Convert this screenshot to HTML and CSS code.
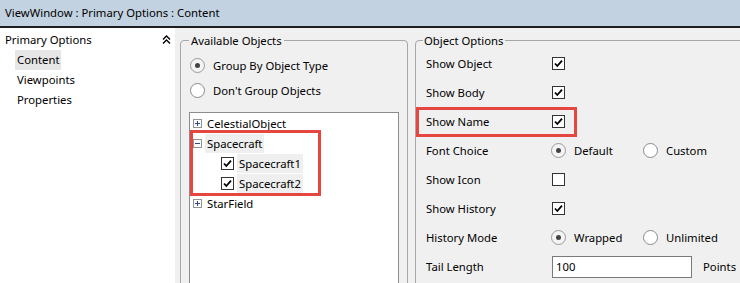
FILE: index.html
```html
<!DOCTYPE html>
<html lang="en">

<head>
    <meta charset="UTF-8">
    <title>ViewWindow</title>
    <link rel="stylesheet" href="styles.css">
</head>

<body>
    <div class="titlebar">ViewWindow : Primary Options : Content</div>

    <div class="main">
        <aside class="sidebar">
            <div class="side-head">
                <span>Primary Options</span>
                <svg class="collapse" width="9" height="9" viewBox="0 0 9 9">
                    <polyline points="1,4.5 4.5,1 8,4.5" />
                    <polyline points="1,8.5 4.5,5 8,8.5" />
                </svg>
            </div>
            <ul class="side-list">
                <li class="active"><span>Content</span></li>
                <li><span>Viewpoints</span></li>
                <li><span>Properties</span></li>
            </ul>
        </aside>

        <div class="content">
            <fieldset class="group available">
                <legend>Available Objects</legend>
                <div class="radio-row"><span class="radio checked"></span>Group By Object Type</div>
                <div class="radio-row"><span class="radio"></span>Don't Group Objects</div>

                <div class="tree">
                    <div class="node">
                        <svg class="exp" width="9" height="9" viewBox="0 0 9 9">
                            <rect x="0.5" y="0.5" width="8" height="8" />
                            <line x1="2" y1="4.5" x2="7" y2="4.5" />
                            <line x1="4.5" y1="2" x2="4.5" y2="7" />
                        </svg>
                        <span class="name">CelestialObject</span>
                    </div>
                    <div class="marked tree-mark">
                        <div class="node">
                            <svg class="exp" width="9" height="9" viewBox="0 0 9 9">
                                <rect x="0.5" y="0.5" width="8" height="8" />
                                <line x1="2" y1="4.5" x2="7" y2="4.5" />
                            </svg>
                            <span class="name sel">Spacecraft</span>
                        </div>
                        <div class="node child">
                            <span class="check on"></span>
                            <span class="name sel">Spacecraft1</span>
                        </div>
                        <div class="node child">
                            <span class="check on"></span>
                            <span class="name sel">Spacecraft2</span>
                        </div>
                    </div>
                    <div class="node">
                        <svg class="exp" width="9" height="9" viewBox="0 0 9 9">
                            <rect x="0.5" y="0.5" width="8" height="8" />
                            <line x1="2" y1="4.5" x2="7" y2="4.5" />
                            <line x1="4.5" y1="2" x2="4.5" y2="7" />
                        </svg>
                        <span class="name">StarField</span>
                    </div>
                </div>
            </fieldset>

            <fieldset class="group options">
                <legend>Object Options</legend>
                <div class="opt-row"><span class="opt-label">Show Object</span><span class="check on"></span></div>
                <div class="opt-row"><span class="opt-label">Show Body</span><span class="check on"></span></div>
                <div class="opt-row marked name-mark"><span class="opt-label">Show Name</span><span class="check on"></span></div>
                <div class="opt-row">
                    <span class="opt-label">Font Choice</span>
                    <span class="choice"><span class="radio checked"></span>Default</span>
                    <span class="choice"><span class="radio"></span>Custom</span>
                </div>
                <div class="opt-row"><span class="opt-label">Show Icon</span><span class="check"></span></div>
                <div class="opt-row"><span class="opt-label">Show History</span><span class="check on"></span></div>
                <div class="opt-row">
                    <span class="opt-label">History Mode</span>
                    <span class="choice"><span class="radio checked"></span>Wrapped</span>
                    <span class="choice"><span class="radio"></span>Unlimited</span>
                </div>
                <div class="opt-row">
                    <span class="opt-label">Tail Length</span>
                    <span class="textbox">100</span>
                    <span class="unit">Points</span>
                </div>
            </fieldset>
        </div>
    </div>
</body>

</html>
```

FILE: styles.css
```css
body {
    margin: 0;
    height: 283px;
    overflow: hidden;
    font-family: "Noto Sans", Arial, sans-serif;
    font-size: 11.3px;
    color: #000;
    background-color: #f0f0f0;
}

.titlebar {
    height: 26px;
    line-height: 26px;
    padding-left: 5px;
    background-color: #c3d2e1;
    border-bottom: 2px solid #1e1e1e;
}

.main {
    display: flex;
    height: 255px;
    overflow: hidden;
}

/* left navigation */
.sidebar {
    width: 175px;
    flex-shrink: 0;
    background-color: #fff;
}

.side-head {
    display: flex;
    justify-content: space-between;
    align-items: center;
    height: 22px;
    padding: 0 4px 0 5px;
}

.collapse polyline {
    fill: none;
    stroke: #000;
    stroke-width: 1.4;
}

.side-list {
    list-style: none;
    margin: 0;
    padding: 0;
}

.side-list li {
    height: 20px;
    line-height: 20px;
    padding-left: 15px;
}

.side-list span {
    display: inline-block;
    padding: 0 2px;
}

.side-list li.active span {
    background-color: #e6e6e6;
}

/* group boxes */
.content {
    display: flex;
    gap: 7px;
    padding-left: 5px;
}

.group {
    margin: 4px 0 0 0;
    border: 1px solid #a7a7a7;
    border-radius: 4px;
    height: 300px;
    box-sizing: border-box;
}

.group legend {
    line-height: 17px;
    padding: 0 2px;
}

.available {
    width: 228px;
    flex-shrink: 0;
    padding: 4px 8px 0 8px;
}

.options {
    width: 340px;
    flex-shrink: 0;
    padding: 0 8px 0 7px;
}

.options legend {
    padding: 0 1px;
}

/* radio buttons and checkboxes */
.radio {
    display: inline-block;
    box-sizing: border-box;
    width: 15px;
    height: 15px;
    border: 1px solid #8a8a8a;
    border-radius: 50%;
    background-color: #fff;
    margin-right: 8px;
    position: relative;
    flex-shrink: 0;
}

.radio.checked {
    background-color: #f4f4f4;
    border-color: #9a9a9a;
}

.radio.checked::after {
    content: "";
    position: absolute;
    left: 4px;
    top: 4px;
    width: 5px;
    height: 5px;
    border-radius: 50%;
    background-color: #444;
}

.radio-row {
    display: flex;
    align-items: center;
    height: 25px;
    padding-left: 1px;
}

.check {
    display: inline-block;
    box-sizing: border-box;
    width: 13px;
    height: 13px;
    border: 1px solid #333;
    background-color: #fff;
    flex-shrink: 0;
}

.check.on {
    background-image: url("data:image/svg+xml,%3Csvg xmlns='http://www.w3.org/2000/svg' width='11' height='11' viewBox='0 0 11 11'%3E%3Cpolyline points='2,5.5 4.3,8 9,2.6' fill='none' stroke='%23000' stroke-width='1.8'/%3E%3C/svg%3E");
    background-repeat: no-repeat;
}

/* tree view */
.tree {
    margin-top: 9px;
    height: 200px;
    border: 1px solid #8c8c8c;
    background-color: #fff;
}

.node {
    display: flex;
    align-items: center;
    height: 20px;
    padding-left: 3px;
}

.node.child {
    padding-left: 31px;
}

.exp rect {
    fill: #fcfcfc;
    stroke: #949494;
}

.exp line {
    stroke: #2d4a8a;
    stroke-width: 1;
}

.name {
    line-height: 19px;
    padding: 0 2px;
    margin-left: 3px;
}

.name.sel {
    background-color: #efefef;
}

/* red annotation boxes */
.marked {
    position: relative;
}

.marked::after {
    content: "";
    position: absolute;
    box-sizing: border-box;
    border: 3px solid #e5463f;
}

.tree-mark::after {
    left: 0;
    top: -3px;
    bottom: -3px;
    width: 131px;
}

.name-mark::after {
    left: -7px;
    top: 0;
    width: 161px;
    height: 30px;
}

/* option rows */
.opt-row {
    display: flex;
    align-items: center;
    height: 29px;
    padding-left: 3px;
}

.opt-label {
    width: 126px;
    flex-shrink: 0;
}

.choice {
    display: flex;
    align-items: center;
    width: 92px;
    margin-left: -1px;
    margin-right: 1px;
}

.textbox {
    box-sizing: border-box;
    width: 140px;
    height: 22px;
    line-height: 20px;
    padding-left: 3px;
    border: 1px solid #7a7a7a;
    background-color: #fff;
}

.unit {
    margin-left: 11px;
}
```
